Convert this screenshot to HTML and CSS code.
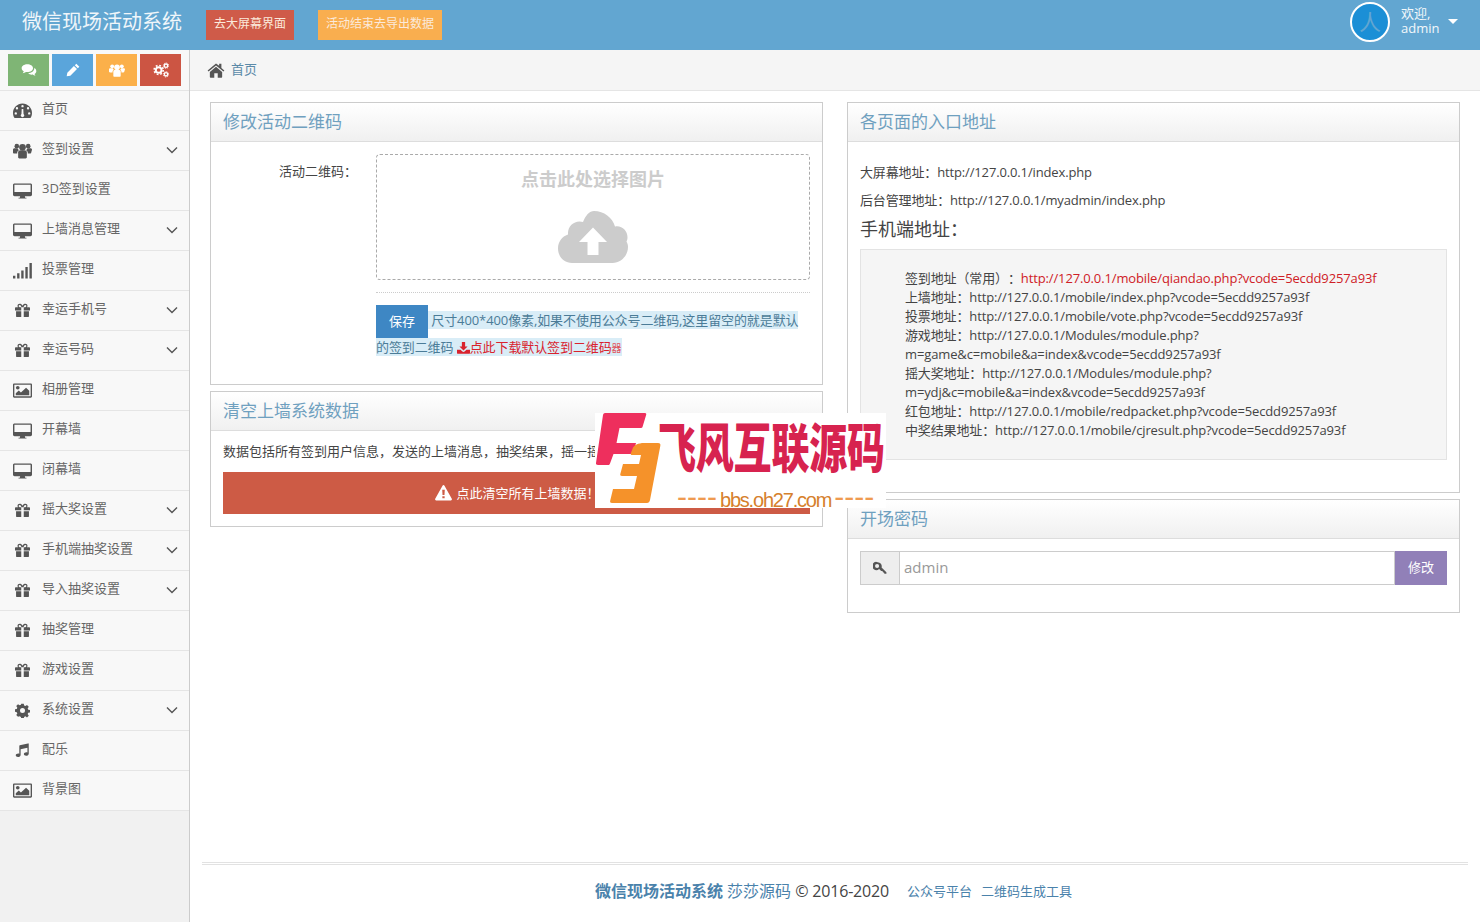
FILE: index.html
```html
<!DOCTYPE html>
<html lang="zh-CN">
<head>
<meta charset="utf-8">
<title>微信现场活动系统</title>
<link rel="stylesheet" href="styles.css">
</head>
<body>
<svg class="sprite" width="0" height="0" aria-hidden="true">
  <defs>
    <symbol id="i-comments" viewBox="0 0 24 24"><path d="M9.500 3.500C4.800 3.500 1 6 1 9.300c0 1.900 1.300 3.500 3.200 4.600-.3 1.200-1 2.200-1.700 3 2-.2 3.700-1 5-2 .6.100 1.300.2 2 .2 4.700 0 8.500-2.500 8.500-5.800S14.200 3.500 9.500 3.500z"/><path d="M19.800 8.500c.2.400.2.800.2 1 0 4-4.200 7-9.300 7.500 1.300 1.200 3.200 2 5.300 2 .5 0 1-.1 1.500-.1 1.100.8 2.500 1.500 4.300 1.700-.6-.7-1.200-1.600-1.500-2.700 1.600-1 2.700-2.500 2.700-4.200 0-2-1.200-3.800-3.200-5.200z"/></symbol>
    <symbol id="i-pencil" viewBox="0 0 24 24"><path d="M17 2.500l4.500 4.500-2.300 2.300-4.500-4.500zM13.400 6l4.600 4.600L8 20.600 2.500 21.500l1-5.500z"/></symbol>
    <symbol id="i-group" viewBox="0 0 24 24"><circle cx="12" cy="8" r="4.200"/><circle cx="4.800" cy="6.500" r="2.900"/><circle cx="19.200" cy="6.500" r="2.900"/><path d="M6.500 14.500c0-1.500 1.500-2.700 3-2.700h5c1.500 0 3 1.200 3 2.700v6c0 .8-.6 1.500-1.500 1.500H8c-.9 0-1.500-.7-1.500-1.500z"/><path d="M0 11c0-1 .9-1.800 2-1.800h3.700c.3 1 1 1.800 1.800 2.400-1.300.6-2.200 1.700-2.200 3.200v1H1.500C.6 15.800 0 15.200 0 14.400zM24 11c0-1-.9-1.800-2-1.800h-3.700c-.3 1-1 1.800-1.800 2.400 1.300.6 2.200 1.700 2.200 3.200v1h2.800c.9 0 1.500-.6 1.500-1.400z"/></symbol>
    <symbol id="i-cogs" viewBox="0 0 24 24">
      <g fill="none" stroke="currentColor">
        <circle cx="8.500" cy="12" r="4.300" stroke-width="3"/>
        <circle cx="8.500" cy="12" r="6.800" stroke-width="2.400" stroke-dasharray="2.700 2.640"/>
        <circle cx="19.500" cy="5.500" r="2.500" stroke-width="2"/>
        <circle cx="19.500" cy="5.500" r="4" stroke-width="1.400" stroke-dasharray="1.600 1.540"/>
        <circle cx="19.500" cy="18.500" r="2.500" stroke-width="2"/>
        <circle cx="19.500" cy="18.500" r="4" stroke-width="1.400" stroke-dasharray="1.600 1.540"/>
      </g>
    </symbol>
    <symbol id="i-home" viewBox="0 0 24 24"><path d="M12 3.200L.8 12.500l1.300 1.500L12 5.900l9.900 8.100 1.300-1.500-4-3.300V3.500h-3v2.900z"/><path d="M12 7.800l8.200 6.700v6.800c0 .5-.4.900-.9.900h-5v-6h-4.600v6h-5c-.5 0-.9-.4-.9-.9v-6.800z"/></symbol>
    <symbol id="i-dash" viewBox="0 0 24 24"><path fill-rule="evenodd" d="M12 3C5.400 3 0 8.400 0 15c0 2.300.6 4.300 1.700 6.100.2.300.5.400.9.400h18.800c.4 0 .7-.1.900-.4C23.400 19.300 24 17.300 24 15c0-6.600-5.400-12-12-12zM5 7.700a1.500 1.500 0 1 1 0 3 1.500 1.500 0 0 1 0-3zM3.500 14.200a1.500 1.500 0 1 1 0 3 1.500 1.500 0 0 1 0-3zM12 5a1.500 1.500 0 1 1 0 3 1.500 1.500 0 0 1 0-3zM19 7.700a1.500 1.500 0 1 1 0 3 1.500 1.500 0 0 1 0-3zM20.500 14.200a1.500 1.500 0 1 1 0 3 1.500 1.500 0 0 1 0-3zM11 10h2l.3 6.400a2.200 2.200 0 1 1-2.600 0z"/></symbol>
    <symbol id="i-desktop" viewBox="0 0 24 24"><path fill-rule="evenodd" d="M2 3h20c1.100 0 2 .8 2 1.800v12.700c0 1-.9 1.800-2 1.800h-7l.3 1.700h1.700V22H7v-1h1.700l.3-1.700H2c-1.100 0-2-.8-2-1.800V4.800C0 3.800.9 3 2 3zm-.2 1.800V14h20.400V4.800z"/></symbol>
    <symbol id="i-signal" viewBox="0 0 24 24"><path d="M0 18.500h3V22H0zM5.200 15.500h3V22h-3zM10.400 12h3v10h-3zM15.600 7.500h3V22h-3zM20.800 2.500h3V22h-3z"/></symbol>
    <symbol id="i-gift" viewBox="0 0 24 24"><path fill-rule="evenodd" d="M7.500 1C5.500 1 4 2.500 4 4.400c0 .9.300 1.700.8 2.300H1.500C.7 6.700 0 7.400 0 8.200v3.600h10v-5h4v5h10V8.200c0-.8-.7-1.500-1.500-1.500h-3.300c.5-.6.800-1.400.8-2.300C20 2.500 18.500 1 16.500 1c-1.900 0-3.300 1-4.500 3.200C10.800 2 9.400 1 7.500 1zm0 2.200c1.200 0 2 1.200 2.900 3.500h-2.900c-1 0-1.600-.7-1.600-1.800s.6-1.700 1.600-1.700zm9 0c1 0 1.600.6 1.600 1.700s-.6 1.800-1.600 1.800h-2.900c.9-2.300 1.700-3.500 2.900-3.500z"/><path d="M1.700 13h8.300v9.500H3.400c-.9 0-1.700-.7-1.700-1.500zM14 13h8.300v8c0 .8-.8 1.500-1.700 1.500H14z"/></symbol>
    <symbol id="i-picture" viewBox="0 0 24 24"><path fill-rule="evenodd" d="M1.500 3h21c.8 0 1.500.7 1.500 1.500v15c0 .8-.7 1.500-1.500 1.500h-21C.7 21 0 20.300 0 19.500v-15C0 3.700.7 3 1.500 3zM1.700 4.700v14.600h20.600V4.700z"/><circle cx="6" cy="8.500" r="2.300"/><path d="M3.500 18v-2.600l3.800-3.500 2.700 2.500 6.500-6 4 4V18z"/></symbol>
    <symbol id="i-cog" viewBox="0 0 24 24"><path fill-rule="evenodd" d="M10 1h4l.6 3 2 .9 2.600-1.700 2.800 2.800-1.700 2.600.9 2 2.800.4v4l-2.800.6-.9 2 1.700 2.600-2.800 2.800-2.600-1.700-2 .9-.6 2.800h-4l-.6-2.800-2-.9L4.800 22 2 19.200l1.700-2.600-.9-2L0 14v-4l2.800-.6.900-2L2 4.800 4.800 2l2.600 1.700 2-.9zM12 8a4 4 0 1 0 0 8 4 4 0 0 0 0-8z"/></symbol>
    <symbol id="i-music" viewBox="0 0 24 24"><path d="M22 1.500v15.700c0 2-2 3.300-4.200 3.300-2 0-3.600-1.200-3.600-2.800 0-1.800 2-3 4-3 .6 0 1.200.1 1.700.3V7.600L9 10v9.200c0 2-2 3.300-4.200 3.300-2 0-3.600-1.200-3.600-2.800 0-1.800 2-3 4-3 .6 0 1.200.1 1.700.3V4.600c0-.5.300-.9.800-1l13-3c.7-.1 1.300.3 1.300.9z"/></symbol>
    <symbol id="i-key" viewBox="0 0 24 24"><path fill-rule="evenodd" d="M8 2a7 7 0 0 1 6.700 9l8.300 8.300V22h-3l-1-1v-1.500h-1.500l-1-1V17H14l-3.500-3.400A7 7 0 1 1 8 2zM7 5a3.500 3.500 0 1 0 0 7 3.500 3.500 0 0 0 0-7z"/></symbol>
    <symbol id="i-warn" viewBox="0 0 24 24"><path fill-rule="evenodd" d="M12 1.500c.6 0 1.100.3 1.400.8l10.300 18.500c.3.500.3 1.100 0 1.600-.3.500-.8.800-1.400.8H1.700c-.6 0-1.100-.3-1.400-.8-.3-.5-.3-1.100 0-1.600L10.600 2.300c.3-.5.800-.8 1.400-.8zM10.200 8l.4 7.600h2.800l.4-7.600zM10.400 17.200v3h3.200v-3z"/></symbol>
    <symbol id="i-download" viewBox="0 0 24 24"><path d="M9 2h6v8h4.500L12 17.500 4.500 10H9z"/><path d="M0 16h6.500l3.500 3.500c1.100 1.100 2.900 1.100 4 0l3.500-3.500H24v6.500c0 .5-.5 1-1 1H1c-.5 0-1-.5-1-1z"/></symbol>
    <symbol id="i-cloud" viewBox="0 0 70 52"><path fill-rule="evenodd" d="M36 0c10 0 18.500 6.500 21 15.500 1-.2 1-.3 2-.3 6 0 10.500 5 10.500 11 0 2-.3 2.700-1 4.300C69.500 32.500 70 34 70 36c0 8.500-7 16-15.500 16H14C6 52 0 45.500 0 37.500c0-6.500 4-12 10-14 0-.7 0-1 0-1.500 0-6.500 5.300-11.500 11.500-11.500 1.500 0 2.500.2 3.500.6C27.500 4.500 31.500 0 36 0zM35 16.500L21 31H29.500v13h11V31h8.500z"/></symbol>
    <symbol id="i-chev" viewBox="0 0 12 8"><path d="M1 1.500l5 5 5-5" fill="none" stroke="currentColor" stroke-width="1.400"/></symbol>
  </defs>
</svg>

<header class="topbar">
  <div class="brand">微信现场活动系统</div>
  <a class="top-btn top-red">去大屏幕界面</a>
  <a class="top-btn top-orange">活动结束去导出数据</a>
  <div class="user">
    <div class="avatar">人</div>
    <div class="user-text"><span>欢迎,</span><span class="user-name">admin</span></div>
    <span class="caret"></span>
  </div>
</header>

<div class="layout">
  <aside class="sidebar">
    <div class="shortcuts">
      <a class="sc sc-green"><svg><use href="#i-comments"/></svg></a>
      <a class="sc sc-blue"><svg><use href="#i-pencil"/></svg></a>
      <a class="sc sc-orange"><svg><use href="#i-group"/></svg></a>
      <a class="sc sc-red"><svg><use href="#i-cogs"/></svg></a>
    </div>
    <ul class="nav">
      <li><svg class="ni"><use href="#i-dash"/></svg><span>首页</span></li>
      <li><svg class="ni"><use href="#i-group"/></svg><span>签到设置</span><svg class="chev"><use href="#i-chev"/></svg></li>
      <li><svg class="ni"><use href="#i-desktop"/></svg><span>3D签到设置</span></li>
      <li><svg class="ni"><use href="#i-desktop"/></svg><span>上墙消息管理</span><svg class="chev"><use href="#i-chev"/></svg></li>
      <li><svg class="ni"><use href="#i-signal"/></svg><span>投票管理</span></li>
      <li><svg class="ni ni-s"><use href="#i-gift"/></svg><span>幸运手机号</span><svg class="chev"><use href="#i-chev"/></svg></li>
      <li><svg class="ni ni-s"><use href="#i-gift"/></svg><span>幸运号码</span><svg class="chev"><use href="#i-chev"/></svg></li>
      <li><svg class="ni"><use href="#i-picture"/></svg><span>相册管理</span></li>
      <li><svg class="ni"><use href="#i-desktop"/></svg><span>开幕墙</span></li>
      <li><svg class="ni"><use href="#i-desktop"/></svg><span>闭幕墙</span></li>
      <li><svg class="ni ni-s"><use href="#i-gift"/></svg><span>摇大奖设置</span><svg class="chev"><use href="#i-chev"/></svg></li>
      <li><svg class="ni ni-s"><use href="#i-gift"/></svg><span>手机端抽奖设置</span><svg class="chev"><use href="#i-chev"/></svg></li>
      <li><svg class="ni ni-s"><use href="#i-gift"/></svg><span>导入抽奖设置</span><svg class="chev"><use href="#i-chev"/></svg></li>
      <li><svg class="ni ni-s"><use href="#i-gift"/></svg><span>抽奖管理</span></li>
      <li><svg class="ni ni-s"><use href="#i-gift"/></svg><span>游戏设置</span></li>
      <li><svg class="ni ni-s"><use href="#i-cog"/></svg><span>系统设置</span><svg class="chev"><use href="#i-chev"/></svg></li>
      <li><svg class="ni ni-s"><use href="#i-music"/></svg><span>配乐</span></li>
      <li><svg class="ni"><use href="#i-picture"/></svg><span>背景图</span></li>
    </ul>
  </aside>

  <main class="main">
    <div class="crumb"><svg class="crumb-icon"><use href="#i-home"/></svg><a class="crumb-link">首页</a></div>
    <div class="columns">
      <div class="col">
        <section class="panel panel-qr">
          <h2 class="panel-head">修改活动二维码</h2>
          <div class="qr-body">
            <div class="qr-row">
              <label class="qr-label">活动二维码：</label>
              <div class="qr-field">
                <div class="drop">
                  <div class="drop-title">点击此处选择图片</div>
                  <svg class="drop-cloud"><use href="#i-cloud"/></svg>
                </div>
                <div class="qr-sep"></div>
                <div class="qr-note"><a class="save">保存</a><span class="hl"> 尺寸400*400像素,如果不使用公众号二维码,这里留空的就是默认的签到二维码 <a class="dl"><svg class="dl-icon"><use href="#i-download"/></svg>点此下载默认签到二维码<span class="dl-tail">器</span></a></span></div>
              </div>
            </div>
          </div>
        </section>
        <section class="panel">
          <h2 class="panel-head">清空上墙系统数据</h2>
          <div class="clear-body">
            <p class="clear-text">数据包括所有签到用户信息，发送的上墙消息，抽奖结果，摇一摇数据等</p>
            <a class="danger"><svg class="danger-icon"><use href="#i-warn"/></svg>点此清空所有上墙数据！</a>
          </div>
        </section>
      </div>

      <div class="col">
        <section class="panel">
          <h2 class="panel-head">各页面的入口地址</h2>
          <div class="addr-body">
            <p class="addr">大屏幕地址：http://127.0.0.1/index.php</p>
            <p class="addr">后台管理地址：http://127.0.0.1/myadmin/index.php</p>
            <h3 class="addr-h">手机端地址：</h3>
            <div class="well">
              <div>签到地址（常用）：<span class="red">http://127.0.0.1/mobile/qiandao.php?vcode=5ecdd9257a93f</span></div>
              <div>上墙地址：http://127.0.0.1/mobile/index.php?vcode=5ecdd9257a93f</div>
              <div>投票地址：http://127.0.0.1/mobile/vote.php?vcode=5ecdd9257a93f</div>
              <div>游戏地址：http://127.0.0.1/Modules/module.php?m=game&amp;c=mobile&amp;a=index&amp;vcode=5ecdd9257a93f</div>
              <div>摇大奖地址：http://127.0.0.1/Modules/module.php?m=ydj&amp;c=mobile&amp;a=index&amp;vcode=5ecdd9257a93f</div>
              <div>红包地址：http://127.0.0.1/mobile/redpacket.php?vcode=5ecdd9257a93f</div>
              <div>中奖结果地址：http://127.0.0.1/mobile/cjresult.php?vcode=5ecdd9257a93f</div>
            </div>
          </div>
        </section>
        <section class="panel">
          <h2 class="panel-head">开场密码</h2>
          <div class="pw-body">
            <div class="input-group">
              <span class="addon"><svg class="key"><use href="#i-key"/></svg></span>
              <input class="pw-input" placeholder="admin">
              <a class="pw-btn">修改</a>
            </div>
          </div>
        </section>
      </div>
    </div>

    <footer class="footer">
      <strong class="f-brand">微信现场活动系统</strong> <span class="f-blue">莎莎源码</span> <span class="f-copy">© 2016-2020</span>
      <a class="f-link f-link-first">公众号平台</a><a class="f-link">二维码生成工具</a>
    </footer>
  </main>
</div>

<div class="watermark">
  <svg class="wm-logo" viewBox="0 0 70 95">
    <path fill="#ee2f5d" d="M10 0H50c1 0 1.500 .7 1.200 1.800L47.500 14c-.3 .8-1 1-2 1H24.500L21.500 30H41l-3 11H18.500L15 50.500c-.4 1-1 1.500-2 1.500H3c-1.500 0-2.200-.8-2-2L8 2c.3-1.200 1-2 2-2z"/>
    <path fill="#f5922a" d="M49 30H63c2 0 2.800 1 2.300 3L55 87c-.4 2-1.500 3-3 3H17c-1.500 0-2.200-1-1.800-2.300L18 76H39L42 63H27c-1.500 0-2-.8-1.700-2L28 51H44L46 42H37c-1 0-1.500-.7-1.200-1.800L37.500 36c1-4 6-6 11.500-6z"/>
  </svg>
  <div class="wm-title">飞风互联源码</div>
  <div class="wm-url"><span class="wm-dash">----</span><span class="wm-domain">bbs.oh27.com</span><span class="wm-dash">----</span></div>
</div>
</body>
</html>
```

FILE: styles.css
```css
* { box-sizing: border-box; }
html, body { height: 100%; }
body {
  margin: 0;
  font-family: "Open Sans", "Noto Sans CJK SC", sans-serif;
  font-size: 13px;
  color: #444;
  background: #fff;
  overflow: hidden;
  display: flex;
  flex-direction: column;
  text-spacing-trim: space-all;
}
a { text-decoration: none; color: inherit; }
p, h2, h3, ul { margin: 0; padding: 0; }
ul { list-style: none; }
.sprite { position: absolute; }
svg { fill: currentColor; }

.topbar {
  height: 50px;
  flex: none;
  background: #62a6d1;
  display: flex;
  align-items: flex-start;
  padding-left: 22px;
  color: #fff;
}
.brand { font-size: 20px; line-height: 44px; width: 184px; color: #f0f6fa; }
.top-btn {
  margin-top: 10px;
  height: 30px;
  line-height: 28px;
  padding: 0 8px;
  font-size: 12px;
  color: #fbeadb;
  white-space: nowrap;
}
.top-red { background: #cf5b49; margin-right: 24px; }
.top-orange { background: #f9ae4f; }
.user { margin-left: auto; display: flex; align-items: center; height: 44px; margin-right: 22px; }
.avatar {
  width: 40px; height: 40px;
  border-radius: 50%;
  border: 2px solid #fff;
  background: #1b8fd6;
  color: #62a6d1;
  font-size: 22px;
  line-height: 35px;
  text-align: center;
}
.user-text { display: flex; flex-direction: column; margin: -2px 0 0 11px; width: 47px; line-height: 15px; font-size: 13px; color: #f2f8fb; }
.user-name { font-size: 13px; }
.caret {
  width: 0; height: 0;
  border-left: 5px solid transparent;
  border-right: 5px solid transparent;
  border-top: 5px solid #fff;
  margin-top: -2px;
}

.layout { flex: 1; display: flex; min-height: 0; }
.sidebar { width: 190px; flex: none; background: #f1f1f1; border-right: 1px solid #ccc; }
.shortcuts {
  height: 41px;
  padding: 4px 8px 0;
  display: flex;
  gap: 3px;
  border-bottom: 1px solid #e5e5e5;
  background: #f8f8f8;
}
.sc { width: 41px; height: 32px; display: flex; align-items: center; justify-content: center; color: #fff; }
.sc svg { width: 16px; height: 16px; }
.sc-green { background: #7fb575; }
.sc-blue { background: #5aa5db; }
.sc-orange { background: #fbb04a; }
.sc-red { background: #cc5543; }

.nav li {
  height: 40px;
  display: flex;
  align-items: center;
  background: #f8f8f8;
  border-bottom: 1px solid #e5e5e5;
  padding-left: 13px;
  color: #666;
  font-size: 13px;
  position: relative;
}
.nav li > span { margin-top: -6px; }
.ni { width: 19px; height: 19px; color: #555; flex: none; margin-right: 10px; }
.ni-s { width: 15px; height: 15px; margin-left: 2px; margin-right: 12px; }
.chev { width: 12px; height: 8px; margin-left: auto; margin-right: 11px; color: #555; margin-top: -1px; }

.main { flex: 1; min-width: 0; display: flex; flex-direction: column; }
.crumb {
  height: 41px;
  flex: none;
  background: #f5f5f5;
  border-bottom: 1px solid #e5e5e5;
  display: flex;
  align-items: center;
  padding-left: 17px;
  color: #5b8aa8;
}
.crumb-icon { width: 18px; height: 18px; color: #555; margin-right: 6px; }
.crumb-link { margin-top: -3px; }
.columns { display: flex; gap: 24px; padding: 11px 20px 0; }
.col { flex: 1; display: flex; flex-direction: column; gap: 6px; min-width: 0; }
.panel { border: 1px solid #ccc; background: #fff; }
.panel-head {
  height: 39px;
  line-height: 37px;
  padding-left: 12px;
  font-size: 17px;
  font-weight: 400;
  color: #6fa0bf;
  background: linear-gradient(#fff, #f0f0f0);
  border-bottom: 1px solid #ddd;
}

.panel-qr { height: 283px; }
.qr-body { padding: 12px 12px 0; }
.qr-row { display: flex; }
.qr-label { width: 134px; text-align: right; padding-top: 7px; margin-right: 19px; padding-left: 4px; color: #444; flex: none; white-space: nowrap; }
.qr-field { flex: 1; min-width: 0; }
.drop {
  height: 126px;
  border: 1px dashed #aaa;
  border-radius: 4px;
  display: flex;
  flex-direction: column;
  align-items: center;
}
.drop-title { font-size: 18px; font-weight: 700; color: #ccc; margin-top: 10px; line-height: 28px; }
.drop-cloud { width: 70px; height: 52px; color: #ccc; margin-top: 18px; }
.qr-sep { border-top: 1px dotted #ccc; margin-top: 12px; }
.qr-note { margin-top: 12px; line-height: 19px; color: #4b7c98; letter-spacing: -0.1px; }
.save {
  display: inline-block;
  width: 52px;
  height: 33px;
  line-height: 33px;
  text-align: center;
  background: #3e87c4;
  color: #fff;
  letter-spacing: 0;
  vertical-align: middle;
}
.hl { background: #d9edf7; }
.dl { color: #d9232e; }
.dl-icon { width: 13px; height: 13px; vertical-align: -2px; }
.dl-tail { font-size: 10px; color: #e0525a; letter-spacing: 0; }

.clear-body { padding: 0 12px 12px; }
.clear-text { line-height: 20px; padding-top: 10px; margin-bottom: 11px; white-space: nowrap; overflow: hidden; color: #444; }
.danger {
  display: flex;
  align-items: center;
  justify-content: center;
  height: 42px;
  background: #cd5b45;
  color: #fff;
  padding: 0 0 2px 2px;
}
.danger-icon { width: 17px; height: 17px; margin-right: 4px; }

.addr-body { padding: 20px 12px 32px; }
.addr { line-height: 20px; margin-bottom: 8px; color: #444; letter-spacing: -0.14px; }
.addr-h { font-size: 18px; font-weight: 400; line-height: 24px; color: #444; margin-bottom: 8px; margin-top: -1px; }
.well {
  background: #f5f5f5;
  border: 1px solid #e3e3e3;
  padding: 19px 40px 19px 44px;
  line-height: 19px;
  color: #444;
  letter-spacing: -0.13px;
}
.red { color: #cf2026; }

.pw-body { padding: 12px 12px 27px; }
.input-group { display: flex; height: 34px; }
.addon {
  width: 39px;
  flex: none;
  background: #eee;
  border: 1px solid #ccc;
  border-right: 0;
  display: flex;
  align-items: center;
  justify-content: center;
  color: #555;
}
.key { width: 14px; height: 14px; }
.pw-input {
  flex: 1;
  min-width: 0;
  border: 1px solid #ccc;
  padding: 0 4px 2px;
  font: 15px "Open Sans", sans-serif;
  outline: 0;
}
.pw-input::placeholder { color: #999; }
.pw-btn {
  width: 52px;
  flex: none;
  background: #9180b8;
  color: #fff;
  text-align: center;
  line-height: 32px;
}

.footer {
  margin: auto 12px 0;
  padding-right: 3px;
  border-top: 3px double #e2e2e2;
  height: 60px;
  line-height: 52px;
  text-align: center;
  font-size: 16px;
  color: #444;
}
.f-brand { color: #4a82ab; }
.f-blue { color: #4a82ab; }
.f-copy { letter-spacing: -0.2px; }
.f-link { font-size: 13px; color: #4a82ab; margin-left: 9px; vertical-align: 1px; }
.f-link-first { margin-left: 14px; }

.watermark {
  position: absolute;
  left: 595px;
  top: 413px;
  width: 291px;
  height: 95px;
  background: #fff;
}
.wm-logo { position: absolute; left: 0; top: 0; width: 70px; height: 95px; }
.wm-title {
  position: absolute;
  left: 63px;
  top: 5px;
  width: 228px;
  font: 900 38px/56px "Noto Sans CJK SC", sans-serif;
  letter-spacing: -0.2px;
  color: #d7234f;
  white-space: nowrap;
  transform: scaleY(1.4);
}
.wm-url {
  position: absolute;
  left: 82px;
  top: 74px;
  font: 20px/26px "Liberation Sans", sans-serif;
  color: #d6802c;
  white-space: nowrap;
}
.wm-dash { color: #ef9a50; font-size: 30px; line-height: 0; }
.wm-domain { letter-spacing: -1.200px; margin: 0 3px; }
```
